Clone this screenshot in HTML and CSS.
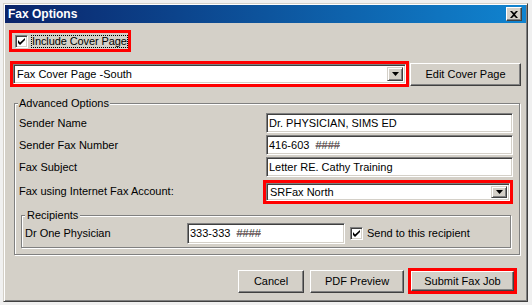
FILE: index.html
```html
<!DOCTYPE html>
<html lang="en">
<head>
    <meta charset="UTF-8">
    <title>Fax Options</title>
    <meta name="viewport" content="width=device-width">
    <link rel="stylesheet" href="styles.css">
</head>
<body>
    <div class="window">
        <div class="titlebar">
            <span class="title">Fax Options</span>
            <span class="close-btn">
                <svg width="8" height="7" viewBox="0 0 8 7"><path d="M0 0h2l2 2 2-2h2L5 3.5 8 7H6L4 5 2 7H0l3-3.5z" fill="#000"/></svg>
            </span>
        </div>
        <div class="content">
            <div class="cover-row">
                <label class="highlight cover-check">
                    <span class="checkbox"><svg width="7" height="7" viewBox="0 0 7 7"><path d="M0 2v3l2 2 5-5V-0L2 4.5z" fill="#000"/></svg></span>
                    <span class="focus">Include Cover Page</span>
                </label>
            </div>

            <div class="template-row">
                <div class="highlight template-box">
                    <div class="combo">
                        <span class="combo-value">Fax Cover Page -South</span>
                        <span class="drop-btn"><svg width="7" height="4" viewBox="0 0 7 4"><path d="M0 0h7L3.5 4z" fill="#000"/></svg></span>
                    </div>
                </div>
                <button class="btn edit-btn">Edit Cover Page</button>
            </div>

            <fieldset class="group advanced">
                <legend>Advanced Options</legend>
                <div class="form-grid">
                    <label for="sender-name">Sender Name</label>
                    <input class="field" id="sender-name" type="text" value="Dr. PHYSICIAN, SIMS ED">
                    <label for="sender-fax">Sender Fax Number</label>
                    <div class="field" id="sender-fax">416-603  <span class="masked">####</span></div>
                    <label for="fax-subject">Fax Subject</label>
                    <input class="field" id="fax-subject" type="text" value="Letter RE. Cathy Training">
                    <label>Fax using Internet Fax Account:</label>
                    <div class="highlight account-box">
                        <div class="combo">
                            <span class="combo-value">SRFax North</span>
                            <span class="drop-btn"><svg width="7" height="4" viewBox="0 0 7 4"><path d="M0 0h7L3.5 4z" fill="#000"/></svg></span>
                        </div>
                    </div>
                </div>

                <fieldset class="group recipients">
                    <legend>Recipients</legend>
                    <div class="recipient-row">
                        <span class="recipient-name">Dr One Physician</span>
                        <div class="field recipient-fax">333-333  <span class="masked">####</span></div>
                        <label class="send-check">
                            <span class="checkbox"><svg width="7" height="7" viewBox="0 0 7 7"><path d="M0 2v3l2 2 5-5V-0L2 4.5z" fill="#000"/></svg></span>
                            Send to this recipient
                        </label>
                    </div>
                </fieldset>
            </fieldset>

            <div class="button-row">
                <button class="btn cancel-btn">Cancel</button>
                <button class="btn preview-btn">PDF Preview</button>
                <div class="highlight submit-box">
                    <button class="btn submit-btn">Submit Fax Job</button>
                </div>
            </div>
        </div>
    </div>
</body>
</html>
```

FILE: styles.css
```css
*,
*::after,
*::before{
    padding: 0;
    margin: 0;
    box-sizing: border-box;
}
html{
    font: normal 11px/13px "Liberation Sans", Arial, sans-serif;
    color: #000;
}
body{
    background-color: #f0f0f0;
    padding: 3px 0 0 3px;
}
.window{
    width: 525px;
    height: 299px;
    background-color: #d4d0c8;
    border: 1px solid;
    border-color: #d4d0c8 #404040 #404040 #d4d0c8;
    box-shadow: inset 1px 1px #fff, inset -1px -1px #808080;
    padding: 1px;
}
.titlebar{
    height: 18px;
    display: flex;
    align-items: center;
    justify-content: space-between;
    padding: 0 4px 0 3px;
    background: linear-gradient(to right, #0a246a, #1084d0);
}
.title{
    color: #fff;
    font-weight: bold;
    font-size: 12px;
}
.close-btn{
    width: 16px;
    height: 14px;
    display: flex;
    align-items: center;
    justify-content: center;
    background-color: #d4d0c8;
    border: 1px solid;
    border-color: #fff #404040 #404040 #fff;
    box-shadow: inset -1px -1px #808080;
}

.content{
    padding: 7px 9px 0 4px;
}
.highlight{
    border: 3px solid #f00;
}

/* include cover page */
.cover-check{
    width: 122px;
    height: 22px;
    display: flex;
    align-items: center;
    padding-left: 3px;
    white-space: nowrap;
}
.checkbox{
    width: 13px;
    height: 13px;
    flex-shrink: 0;
    display: flex;
    align-items: center;
    justify-content: center;
    background-color: #fff;
    border: 1px solid;
    border-color: #808080 #fff #fff #808080;
    box-shadow: inset 1px 1px #404040, inset -1px -1px #d4d0c8;
}
.focus{
    margin-left: 3px;
    border: 1px dotted #000;
    line-height: 11px;
    letter-spacing: -0.1px;
}

/* combo boxes */
.template-row{
    display: flex;
    align-items: center;
    gap: 1px;
    margin: 9px 0 0 1px;
}
.template-box{
    width: 399px;
    height: 26px;
    flex-shrink: 0;
}
.combo{
    height: 100%;
    display: flex;
    align-items: center;
    background-color: #fff;
    border: 1px solid;
    border-color: #808080 #fff #fff #808080;
    box-shadow: inset 1px 1px #404040, inset -1px -1px #d4d0c8;
    padding: 2px;
}
.combo-value{
    flex: 1;
    padding-left: 1px;
    white-space: nowrap;
}
.drop-btn{
    width: 16px;
    height: 100%;
    display: flex;
    align-items: center;
    justify-content: center;
    background-color: #d4d0c8;
    border: 1px solid;
    border-color: #d4d0c8 #404040 #404040 #d4d0c8;
    box-shadow: inset 1px 1px #fff, inset -1px -1px #808080;
}
.btn{
    font: inherit;
    color: #000;
    background-color: #d4d0c8;
    border: 1px solid;
    border-color: #fff #404040 #404040 #fff;
    box-shadow: inset -1px -1px #808080;
    flex-shrink: 0;
    white-space: nowrap;
}
.edit-btn{
    width: 111px;
    height: 23px;
}

/* group boxes */
.group{
    border: 1px solid #808080;
    box-shadow: inset 1px 1px #fff, 1px 1px #fff;
    min-width: 0;
}
.group legend{
    padding: 0 2px;
    background-color: #d4d0c8;
    line-height: 13px;
}
.advanced{
    width: 506px;
    margin: 10px 0 0 5px;
    padding: 3px 3px 6px 3px;
}
.advanced > legend{
    padding: 0 1px;
}
.form-grid{
    display: grid;
    grid-template-columns: 248px 247px;
    grid-template-rows: 20px 20px 20px auto;
    row-gap: 2px;
    align-items: center;
}
.form-grid label{
    padding-left: 1px;
    white-space: nowrap;
}
.field{
    height: 20px;
    width: 247px;
    font: inherit;
    color: #000;
    background-color: #fff;
    border: 1px solid;
    border-color: #808080 #fff #fff #808080;
    box-shadow: inset 1px 1px #404040, inset -1px -1px #d4d0c8;
    padding: 0 2px;
    outline: none;
    display: flex;
    align-items: center;
    white-space: pre;
}
.masked{
    color: #303030;
    text-decoration: line-through #8a6a6a;
}
.account-box{
    width: 250px;
    height: 24px;
    margin: 1px 0 0 -3px;
}

.recipients{
    width: 490px;
    margin: 5px 0 0 3px;
    padding: 1px 3px 3px 3px;
}
.recipient-row{
    display: flex;
    align-items: center;
}
.recipient-name{
    width: 162px;
}
.recipient-fax{
    width: 158px;
    height: 21px;
}
.send-check{
    display: flex;
    align-items: center;
    gap: 4px;
    margin-left: 5px;
}

/* bottom buttons */
.button-row{
    display: flex;
    justify-content: flex-end;
    align-items: center;
    gap: 6px;
    margin-top: 13px;
}
.cancel-btn{
    width: 66px;
    height: 23px;
}
.preview-btn{
    width: 94px;
    height: 23px;
}
.submit-box{
    width: 109px;
    height: 26px;
    margin-left: -2px;
}
.submit-btn{
    width: 100%;
    height: 100%;
}
```
